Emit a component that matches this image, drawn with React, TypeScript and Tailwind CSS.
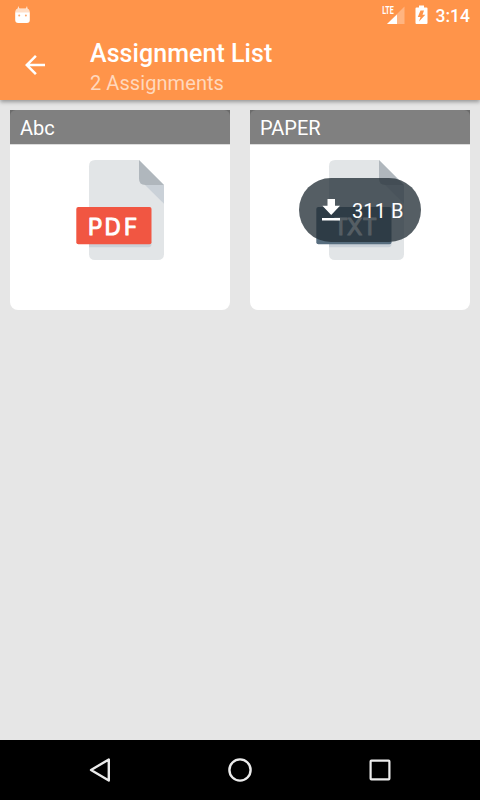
import clsx from 'clsx'
import React from 'react'

type Assignment = {
  title: string
  type: string
  color: string
  letters: string
  size?: string
}

const assignments: Assignment[] = [
  { title: 'Abc', type: 'PDF', color: '#f15642', letters: '11.9 28.4 48' },
  { title: 'PAPER', type: 'TXT', color: '#576d7e', letters: '17.4 31 46.6', size: '311 B' },
]

const StatusBar: React.FC = () => (
  <div className="flex h-[30px] items-center justify-between pl-[15px] pr-[10px]">
    <svg className="h-[18px] w-[15px]" viewBox="0 0 15 18" fill="white">
      <path d="M3.200 0 5 4H2.400zM12 0 12.800 4H10.200z" opacity="0.8" />
      <path d="M3 2.500h9Q14.700 2.800 14.800 7v7q0 3-3 3H3.200q-3 0-3-3V7Q0.300 2.800 3 2.500z" />
      <path d="M0.300 6.500Q.5 2.800 3 2.500h9q2.500.3 2.700 4z" fill="#ff944a" opacity="0.3" />
      <circle cx="4.200" cy="9.500" r="1" fill="#ffa96c" />
      <circle cx="10.900" cy="9.500" r="1" fill="#ffa96c" />
    </svg>
    <div className="flex items-center">
      <svg className="mr-[10px] h-[20px] w-[23px]" viewBox="0 0 23 20" fill="white">
        <path d="M22.500 1.500V19H5z" opacity="0.3" />
        <path d="M15 9.500V19H5z" />
        {/* keeps the label clear of the signal triangle */}
        <path d="M0 0h13v10H0z" fill="#ff944a" />
        <text
          x="0.300"
          y="9"
          fontSize="10.500"
          fontWeight="700"
          textLength="11.500"
          lengthAdjust="spacingAndGlyphs"
          className="font-['Roboto',sans-serif]"
        >
          LTE
        </text>
      </svg>
      <svg className="mr-[8px] h-[20px] w-[13px]" viewBox="0 0 13 20" fill="white">
        <path d="M4 .5h5v2h2.500q1 0 1 1V18q0 1-1 1h-10q-1 0-1-1V3.500q0-1 1-1H4z" />
        <path d="M9 5.500 7.500 9.800h2.800L4 16.600l1.500-4.700H2.800L5.500 5.500z" fill="#ff944a" />
      </svg>
      <span className="mt-[2px] text-[17.500px] leading-[20px] font-medium text-white">3:14</span>
    </div>
  </div>
)

const FileIcon: React.FC<{ item: Assignment }> = ({ item }) => (
  <svg className="h-[100px] w-[88px]" viewBox="0 0 88 100">
    <path d="M19.200 0H63l25 25v68.800q0 6.200-6.300 6.200H19.200Q13 100 13 93.800V6.200Q13 0 19.200 0z" fill="#e2e5e7" />
    <path d="M69 25h19v18.800z" fill="#cad1d8" />
    <path d="M63 0l25 25H69.300Q63 25 63 18.800z" fill="#b0b7bd" />
    <path d="M13 84h59.300q3.200 0 3.200-3.200V84q0 3.200-3.200 3.200H13z" fill="#cad1d8" />
    <rect x="0.300" y="47" width="75.200" height="37.300" rx="2" fill={item.color} />
    <text
      x={item.letters}
      y="74.600"
      fontSize="22.500"
      fontWeight="400"
      fill="white"
      stroke="white"
      strokeWidth="1"
      strokeLinejoin="round"
      className="font-['Inter',sans-serif]"
    >
      {item.type}
    </text>
  </svg>
)

const AssignmentCard: React.FC<{ item: Assignment }> = ({ item }) => (
  <div className="h-[200px] flex-1 overflow-hidden rounded-b-[8px] bg-white">
    <div className="border-b border-[#dcdcdc] bg-[#6b6b6b]">
      <div className="h-[34px] rounded-t-[6px] bg-[#808080] px-[10px] text-[20px] leading-[37px] text-white">
        {item.title}
      </div>
    </div>
    <div className="relative flex justify-center pt-[15px]">
      <FileIcon item={item} />
      {item.size && (
        <div
          className={clsx(
            'absolute top-[33px] left-[49px] flex h-[64px] w-[122px] items-center rounded-full',
            'bg-[#222e35]/77 pl-[23px] text-[20px] text-white'
          )}
        >
          <svg className="mr-[12px] h-[22px] w-[18px]" viewBox="0 0 18 22" fill="white">
            <path d="M5.500 0h7.500v6.800h5L9.200 16 .4 6.800h5.100zM0 19h18v2.500H0z" />
          </svg>
          <span className="pt-[2px] leading-[24px] tracking-[0.1px]">{item.size}</span>
        </div>
      )}
    </div>
  </div>
)

const BottomBar: React.FC = () => (
  <nav className="flex h-[60px] items-center justify-center gap-[110px] bg-black">
    <svg className="h-[30px] w-[30px]" viewBox="0 0 30 30" fill="none" stroke="#ebebeb" strokeWidth="2.400">
      <path d="M23.800 4.500v21L6 15z" strokeLinejoin="round" />
    </svg>
    <svg className="h-[30px] w-[30px]" viewBox="0 0 30 30" fill="none" stroke="#ebebeb" strokeWidth="2.400">
      <circle cx="15" cy="15" r="10.600" />
    </svg>
    <svg className="h-[30px] w-[30px]" viewBox="0 0 30 30" fill="none" stroke="#ebebeb" strokeWidth="2.200">
      <rect x="5.600" y="5.600" width="18.800" height="18.800" rx="0.800" />
    </svg>
  </nav>
)

export default function App() {
  return (
    <div className="flex h-[800px] w-[480px] flex-col overflow-hidden bg-[#e6e6e6] font-['Roboto',sans-serif]">
      <header className="z-10 h-[100px] bg-[#ff944a] shadow-[0_2px_4px_rgba(0,0,0,0.35)]">
        <StatusBar />
        <div className="flex h-[70px] items-center">
          <button className="ml-[25px] mr-[45px] h-5 w-5" aria-label="Back">
            <svg className="h-5 w-5" viewBox="0 0 20 20" fill="white">
              <path d="M20 8.750H4.800l7-7L10 0 0 10l10 10 1.800-1.800-7-7H20z" />
            </svg>
          </button>
          <div className="pt-[4px]">
            <h1 className="text-[25px] leading-[32px] font-medium tracking-[0.060px] text-white">Assignment List</h1>
            <p className="text-[20px] leading-[26px] tracking-[0.070px] text-[#ffd8bd]">2 Assignments</p>
          </div>
        </div>
      </header>
      <main className="flex flex-1 items-start gap-5 p-[10px]">
        {assignments.map((item) => (
          <AssignmentCard key={item.title} item={item} />
        ))}
      </main>
      <BottomBar />
    </div>
  )
}
